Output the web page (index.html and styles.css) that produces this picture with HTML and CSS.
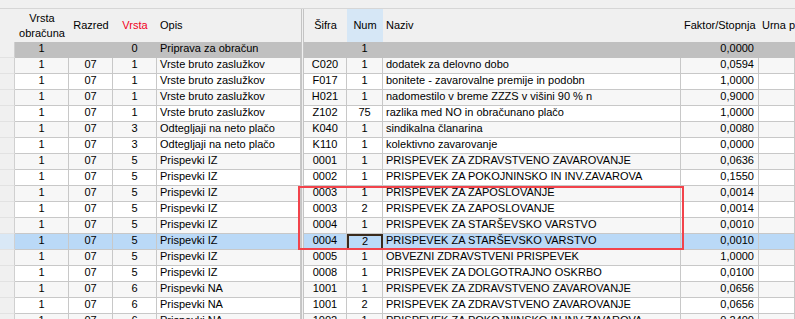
FILE: index.html
```html
<!DOCTYPE html>
<html lang="sl">
<head>
    <meta charset="UTF-8">
    <title>Obračun</title>
    <link rel="stylesheet" href="styles.css">
</head>
<body>

    <div class="toolbar"></div>

    <div class="grid">

        <div class="row head">
            <div class="c rh"></div>
            <div class="c mid two">Vrsta<br>obračuna</div>
            <div class="c mid">Razred</div>
            <div class="c mid red">Vrsta</div>
            <div class="c">Opis</div>
            <div class="split"></div>
            <div class="c mid">Šifra</div>
            <div class="c mid sorted">Num</div>
            <div class="c">Naziv</div>
            <div class="c right">Faktor/Stopnja</div>
            <div class="c">Urna p</div>
        </div>

        <div class="row group">
            <div class="c rh"></div>
            <div class="c mid">1</div>
            <div class="c mid"></div>
            <div class="c mid">0</div>
            <div class="c">Priprava za obračun</div>
            <div class="split"></div>
            <div class="c mid"></div>
            <div class="c mid">1</div>
            <div class="c"></div>
            <div class="c right">0,0000</div>
            <div class="c"></div>
        </div>

        <div class="row odd">
            <div class="c rh"></div>
            <div class="c mid">1</div><div class="c mid">07</div><div class="c mid">1</div>
            <div class="c">Vrste bruto zaslužkov</div>
            <div class="split"></div>
            <div class="c mid">C020</div><div class="c mid">1</div>
            <div class="c">dodatek za delovno dobo</div>
            <div class="c right">0,0594</div><div class="c"></div>
        </div>

        <div class="row">
            <div class="c rh"></div>
            <div class="c mid">1</div><div class="c mid">07</div><div class="c mid">1</div>
            <div class="c">Vrste bruto zaslužkov</div>
            <div class="split"></div>
            <div class="c mid">F017</div><div class="c mid">1</div>
            <div class="c">bonitete - zavarovalne premije in podobn</div>
            <div class="c right">1,0000</div><div class="c"></div>
        </div>

        <div class="row odd">
            <div class="c rh"></div>
            <div class="c mid">1</div><div class="c mid">07</div><div class="c mid">1</div>
            <div class="c">Vrste bruto zaslužkov</div>
            <div class="split"></div>
            <div class="c mid">H021</div><div class="c mid">1</div>
            <div class="c">nadomestilo v breme ZZZS v višini 90 % n</div>
            <div class="c right">0,9000</div><div class="c"></div>
        </div>

        <div class="row">
            <div class="c rh"></div>
            <div class="c mid">1</div><div class="c mid">07</div><div class="c mid">1</div>
            <div class="c">Vrste bruto zaslužkov</div>
            <div class="split"></div>
            <div class="c mid">Z102</div><div class="c mid">75</div>
            <div class="c">razlika med NO in obračunano plačo</div>
            <div class="c right">1,0000</div><div class="c"></div>
        </div>

        <div class="row odd">
            <div class="c rh"></div>
            <div class="c mid">1</div><div class="c mid">07</div><div class="c mid">3</div>
            <div class="c">Odtegljaji na neto plačo</div>
            <div class="split"></div>
            <div class="c mid">K040</div><div class="c mid">1</div>
            <div class="c">sindikalna članarina</div>
            <div class="c right">0,0080</div><div class="c"></div>
        </div>

        <div class="row">
            <div class="c rh"></div>
            <div class="c mid">1</div><div class="c mid">07</div><div class="c mid">3</div>
            <div class="c">Odtegljaji na neto plačo</div>
            <div class="split"></div>
            <div class="c mid">K110</div><div class="c mid">1</div>
            <div class="c">kolektivno zavarovanje</div>
            <div class="c right">0,0000</div><div class="c"></div>
        </div>

        <div class="row odd">
            <div class="c rh"></div>
            <div class="c mid">1</div><div class="c mid">07</div><div class="c mid">5</div>
            <div class="c">Prispevki IZ</div>
            <div class="split"></div>
            <div class="c mid">0001</div><div class="c mid">1</div>
            <div class="c">PRISPEVEK ZA ZDRAVSTVENO ZAVAROVANJE</div>
            <div class="c right">0,0636</div><div class="c"></div>
        </div>

        <div class="row">
            <div class="c rh"></div>
            <div class="c mid">1</div><div class="c mid">07</div><div class="c mid">5</div>
            <div class="c">Prispevki IZ</div>
            <div class="split"></div>
            <div class="c mid">0002</div><div class="c mid">1</div>
            <div class="c">PRISPEVEK ZA POKOJNINSKO IN INV.ZAVAROVA</div>
            <div class="c right">0,1550</div><div class="c"></div>
        </div>

        <div class="row odd">
            <div class="c rh"></div>
            <div class="c mid">1</div><div class="c mid">07</div><div class="c mid">5</div>
            <div class="c">Prispevki IZ</div>
            <div class="split"></div>
            <div class="c mid">0003</div><div class="c mid">1</div>
            <div class="c">PRISPEVEK ZA ZAPOSLOVANJE</div>
            <div class="c right">0,0014</div><div class="c"></div>
        </div>

        <div class="row">
            <div class="c rh"></div>
            <div class="c mid">1</div><div class="c mid">07</div><div class="c mid">5</div>
            <div class="c">Prispevki IZ</div>
            <div class="split"></div>
            <div class="c mid">0003</div><div class="c mid">2</div>
            <div class="c">PRISPEVEK ZA ZAPOSLOVANJE</div>
            <div class="c right">0,0014</div><div class="c"></div>
        </div>

        <div class="row odd">
            <div class="c rh"></div>
            <div class="c mid">1</div><div class="c mid">07</div><div class="c mid">5</div>
            <div class="c">Prispevki IZ</div>
            <div class="split"></div>
            <div class="c mid">0004</div><div class="c mid">1</div>
            <div class="c">PRISPEVEK ZA STARŠEVSKO VARSTVO</div>
            <div class="c right">0,0010</div><div class="c"></div>
        </div>

        <div class="row selected">
            <div class="c rh"></div>
            <div class="c mid">1</div><div class="c mid">07</div><div class="c mid">5</div>
            <div class="c">Prispevki IZ</div>
            <div class="split"></div>
            <div class="c mid">0004</div><div class="c mid focus">2</div>
            <div class="c">PRISPEVEK ZA STARŠEVSKO VARSTVO</div>
            <div class="c right">0,0010</div><div class="c"></div>
        </div>

        <div class="row odd">
            <div class="c rh"></div>
            <div class="c mid">1</div><div class="c mid">07</div><div class="c mid">5</div>
            <div class="c">Prispevki IZ</div>
            <div class="split"></div>
            <div class="c mid">0005</div><div class="c mid">1</div>
            <div class="c">OBVEZNI ZDRAVSTVENI PRISPEVEK</div>
            <div class="c right">1,0000</div><div class="c"></div>
        </div>

        <div class="row">
            <div class="c rh"></div>
            <div class="c mid">1</div><div class="c mid">07</div><div class="c mid">5</div>
            <div class="c">Prispevki IZ</div>
            <div class="split"></div>
            <div class="c mid">0008</div><div class="c mid">1</div>
            <div class="c">PRISPEVEK ZA DOLGOTRAJNO OSKRBO</div>
            <div class="c right">0,0100</div><div class="c"></div>
        </div>

        <div class="row odd">
            <div class="c rh"></div>
            <div class="c mid">1</div><div class="c mid">07</div><div class="c mid">6</div>
            <div class="c">Prispevki NA</div>
            <div class="split"></div>
            <div class="c mid">1001</div><div class="c mid">1</div>
            <div class="c">PRISPEVEK ZA ZDRAVSTVENO ZAVAROVANJE</div>
            <div class="c right">0,0656</div><div class="c"></div>
        </div>

        <div class="row">
            <div class="c rh"></div>
            <div class="c mid">1</div><div class="c mid">07</div><div class="c mid">6</div>
            <div class="c">Prispevki NA</div>
            <div class="split"></div>
            <div class="c mid">1001</div><div class="c mid">2</div>
            <div class="c">PRISPEVEK ZA ZDRAVSTVENO ZAVAROVANJE</div>
            <div class="c right">0,0656</div><div class="c"></div>
        </div>

        <div class="row odd">
            <div class="c rh"></div>
            <div class="c mid">1</div><div class="c mid">07</div><div class="c mid">6</div>
            <div class="c">Prispevki NA</div>
            <div class="split"></div>
            <div class="c mid">1002</div><div class="c mid">1</div>
            <div class="c">PRISPEVEK ZA POKOJNINSKO IN INV.ZAVAROVA</div>
            <div class="c right">0,2400</div><div class="c"></div>
        </div>

        <!-- red marker round the rows in question -->
        <div class="marker"></div>

    </div>

</body>
</html>
```

FILE: styles.css
```css
* {
    margin: 0;
    padding: 0;
    box-sizing: border-box;
}

body {
    width: 795px;
    height: 319px;
    overflow: hidden;
    background-color: #f0f0f0;
    font-family: "Liberation Sans", Arial, sans-serif;
    font-size: 11px;
    color: #000;
}

.toolbar {
    height: 9px;
    background-color: #f0f0f0;
    border-bottom: 1px solid #d6d6d6;
}

.grid {
    position: relative;
}

.row {
    display: grid;
    grid-template-columns: 15px 54px 44px 44px 144px 3px 43px 36px 298px 78px 1fr;
    height: 16px;
    background-color: #fff;
}

.row.odd {
    background-color: #f7f7f7;
}

.c {
    border-right: 1px solid #c8c8c8;
    border-bottom: 1px solid #c8c8c8;
    padding: 0 3px;
    line-height: 13px;
    white-space: nowrap;
    overflow: hidden;
}

.mid {
    text-align: center;
}

.right {
    text-align: right;
    padding-right: 4px;
}

.rh {
    background-color: #f0f0f0;
    border-bottom-color: #e2e2e2;
    border-right-color: #d0d0d0;
}

.split {
    background-color: #f0f0f0;
    border-left: 1px solid #c4c4c4;
    border-right: 1px solid #c4c4c4;
}

/* header */

.row.head {
    height: 33px;
    background-color: #f0f0f0;
}

.head .c {
    border: none;
    line-height: 33px;
}

.head .two {
    line-height: 15px;
    padding-top: 2px;
}

.head .red {
    color: #f0001c;
}

.head .sorted {
    background-color: #d6e7f6;
}

.head .rh {
    background-color: #f0f0f0;
}

/* grouped first row */

.row.group {
    background-color: #c0c0c0;
}

.group .c {
    border-right-color: transparent;
    border-bottom-color: #c0c0c0;
}

.group .rh {
    background-color: #f0f0f0;
    border-right-color: #d0d0d0;
    border-bottom-color: #e2e2e2;
}

/* selected row */

.row.selected {
    background-color: #bad9f7;
}

.selected .rh {
    background-color: #d9e8f6;
}

.focus {
    border: 2px solid #3a2a1c;
    line-height: 11px;
}

.marker {
    position: absolute;
    left: 298px;
    top: 177px;
    width: 386px;
    height: 64px;
    border: 2px solid #f2434b;
}
```
